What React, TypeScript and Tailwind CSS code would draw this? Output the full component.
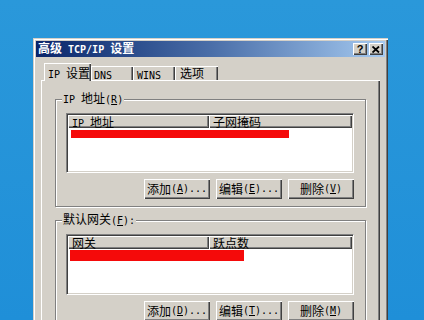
import React from "react";

const M = ({ children, b }: { children: React.ReactNode; b?: boolean }) => (
  <span className={`font-['DejaVu_Sans_Mono',monospace] text-[10px] ${b ? "font-bold" : ""}`}>{children}</span>
);

const U = ({ children }: { children: React.ReactNode }) => <span className="underline underline-offset-[1px]">{children}</span>;

const raised =
  "shadow-[inset_1px_1px_0_#ffffff,inset_-1px_-1px_0_#404040,inset_-2px_-2px_0_#808080]";

const Btn = ({ children }: { children: React.ReactNode }) => (
  <div className={`w-[66px] h-[20px] bg-[#d4d0c8] ${raised} flex items-center justify-center whitespace-nowrap text-black`}>
    {children}
  </div>
);

const List = ({
  h,
  c1,
  c2,
  barW,
  barH,
  barMt,
  barMl,
}: {
  h: string;
  c1: React.ReactNode;
  c2: React.ReactNode;
  barW: string;
  barH: string;
  barMt: string;
  barMl: string;
}) => (
  <div
    className={`${h} bg-white border border-t-[#808080] border-l-[#808080] border-r-white border-b-white shadow-[inset_1px_1px_0_#404040,inset_-1px_-1px_0_#d4d0c8] p-[1px] flex flex-col`}
  >
    <div className="flex h-[13px] shrink-0 leading-[13px]">
      <div className={`w-[141px] bg-[#d4d0c8] ${raised} pl-[4px] whitespace-nowrap`}>{c1}</div>
      <div className={`flex-1 bg-[#d4d0c8] ${raised} pl-[4px] whitespace-nowrap`}>{c2}</div>
    </div>
    <div className={`${barMt} ${barMl} ${barW} ${barH} bg-[#f50a0a] blur-[0.4px]`} />
  </div>
);

export default function App() {
  return (
    <div className="w-[424px] h-[320px] overflow-hidden bg-gradient-to-b from-[#2a98da] to-[#1f8fd8] pt-[38px] pl-[33px] font-['Noto_Sans_CJK_SC',sans-serif] text-[12px] leading-[14px] text-black">
      <div className="w-[355px] h-[300px] bg-[#d4d0c8] p-[3px] shadow-[inset_1px_1px_0_#d4d0c8,inset_2px_2px_0_#ffffff,inset_-1px_-1px_0_#404040,inset_-2px_-2px_0_#808080]">
        {/* title bar */}
        <div className="h-[16px] bg-gradient-to-r from-[#0a246a] via-[#4a6ea8] to-[#a6caf0] flex items-center pl-[2px] pr-[2px]">
          <div className="flex-1 text-white font-bold leading-[16px] whitespace-nowrap">
            高级<M b> TCP/IP </M>设置
          </div>
          <div className="flex gap-[2px]">
            <div className={`w-[14px] h-[12px] bg-[#d4d0c8] ${raised} flex items-center justify-center font-bold text-[11px] leading-[10px] font-['Liberation_Sans',sans-serif]`}>
              ?
            </div>
            <div className={`w-[14px] h-[12px] bg-[#d4d0c8] ${raised} flex items-center justify-center`}>
              <svg width="8" height="7" viewBox="0 0 8 7">
                <path d="M0.5 0.5 L7 6.5 M7 0.5 L0.5 6.5" stroke="#000" strokeWidth="1.8" />
              </svg>
            </div>
          </div>
        </div>

        {/* tabs + panel */}
        <div className="px-[5px] mt-[6px]">
          <div className="flex items-end pl-[3px]">
            <div className="relative z-10 -mb-px w-[47px] h-[18px] bg-[#d4d0c8] shadow-[inset_1px_1px_0_#ffffff,inset_-1px_0_0_#404040,inset_-2px_0_0_#808080] pl-[4px] pt-[3px] whitespace-nowrap">
              <M>IP </M>设置
            </div>
            <div className="w-[42px] h-[14px] bg-[#d4d0c8] shadow-[inset_1px_1px_0_#ffffff,inset_-1px_0_0_#404040,inset_-2px_0_0_#808080] pl-[3px] pt-[1px] whitespace-nowrap">
              <M>DNS</M>
            </div>
            <div className="w-[42px] h-[14px] bg-[#d4d0c8] shadow-[inset_1px_1px_0_#ffffff,inset_-1px_0_0_#404040,inset_-2px_0_0_#808080] pl-[4px] pt-[1px] whitespace-nowrap">
              <M>WINS</M>
            </div>
            <div className="w-[43px] h-[14px] bg-[#d4d0c8] shadow-[inset_1px_1px_0_#ffffff,inset_-1px_0_0_#404040,inset_-2px_0_0_#808080] pl-[5px] leading-[14px] whitespace-nowrap">
              选项
            </div>
          </div>
          <div className="h-[260px] bg-[#d4d0c8] shadow-[inset_1px_1px_0_#ffffff,inset_-1px_-1px_0_#404040,inset_-2px_-2px_0_#808080] px-[14px] pt-[11px]">
            {/* group 1 */}
            <fieldset className="border border-[#808080] shadow-[inset_1px_1px_0_#ffffff,1px_1px_0_#ffffff] pb-[7px]">
              <legend className="ml-[6px] px-[1px] bg-[#d4d0c8] leading-[14px] whitespace-nowrap">
                <M>IP </M>地址<M>(<U>R</U>)</M>
              </legend>
              <div className="pl-[10px] pr-[11px] pt-[6px]">
                <List
                  h="h-[60px]"
                  c1={
                    <>
                      <M>IP </M>地址
                    </>
                  }
                  c2="子网掩码"
                  barW="w-[218px]"
                  barH="h-[8px]"
                  barMt="mt-[2px]"
                  barMl="ml-[3px]"
                />
                <div className="flex justify-end gap-[6px] mt-[6px]">
                  <Btn>
                    添加<M>(<U>A</U>)...</M>
                  </Btn>
                  <Btn>
                    编辑<M>(<U>E</U>)...</M>
                  </Btn>
                  <Btn>
                    删除<M>(<U>V</U>)</M>
                  </Btn>
                </div>
              </div>
            </fieldset>

            {/* group 2 */}
            <fieldset className="mt-[5px] border border-[#808080] shadow-[inset_1px_1px_0_#ffffff,1px_1px_0_#ffffff] pb-[7px]">
              <legend className="ml-[6px] px-[1px] bg-[#d4d0c8] leading-[14px] whitespace-nowrap">
                默认网关<M>(<U>F</U>):</M>
              </legend>
              <div className="pl-[10px] pr-[11px] pt-[6px]">
                <List
                  h="h-[61px]"
                  c1="网关"
                  c2="跃点数"
                  barW="w-[174px]"
                  barH="h-[11px]"
                  barMt="mt-[1px]"
                  barMl="ml-[2px]"
                />
                <div className="flex justify-end gap-[6px] mt-[6px]">
                  <Btn>
                    添加<M>(<U>D</U>)...</M>
                  </Btn>
                  <Btn>
                    编辑<M>(<U>T</U>)...</M>
                  </Btn>
                  <Btn>
                    删除<M>(<U>M</U>)</M>
                  </Btn>
                </div>
              </div>
            </fieldset>
          </div>
        </div>
      </div>
    </div>
  );
}
